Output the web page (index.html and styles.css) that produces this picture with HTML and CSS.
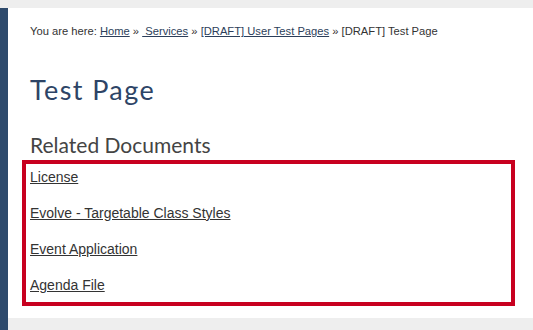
FILE: index.html
```html
<!DOCTYPE html>
<html lang="en">
<head>
<meta charset="utf-8">
<title>Test Page</title>
<link rel="stylesheet" href="styles.css">
</head>
<body>
<div class="topband"></div>
<div class="frame">
  <div class="sidebar"></div>
  <div class="column">
    <main class="content">
      <p class="breadcrumb">You are here: <a href="#">Home</a> &raquo; <a href="#">&nbsp;Services</a> &raquo; <a href="#">[DRAFT] User Test Pages</a> &raquo; [DRAFT] Test Page</p>
      <h1 class="title">Test Page</h1>
      <h2 class="subtitle">Related Documents</h2>
      <div class="docs">
        <p class="doc"><a href="#">License</a></p>
        <p class="doc"><a href="#">Evolve - Targetable Class Styles</a></p>
        <p class="doc"><a href="#">Event Application</a></p>
        <p class="doc"><a href="#">Agenda File</a></p>
      </div>
    </main>
    <div class="footband"></div>
  </div>
</div>
</body>
</html>
```
FILE: styles.css
```css
html, body {
  margin: 0;
  padding: 0;
  height: 100%;
  background: #ffffff;
  overflow: hidden;
}
body {
  display: flex;
  flex-direction: column;
  font-family: "Liberation Sans", Arial, sans-serif;
  color: #333333;
}
.topband {
  height: 8px;
  background: #eeeeee;
  flex: none;
}
.frame {
  flex: 1;
  display: flex;
}
.sidebar {
  width: 8px;
  background: #2e4a6c;
  flex: none;
}
.column {
  flex: 1;
  display: flex;
  flex-direction: column;
}
.content {
  flex: none;
  height: 310px;
  padding: 0 18px 0 14px;
  box-sizing: border-box;
}
.footband {
  flex: 1;
  background: #eeeeee;
}
.breadcrumb {
  margin: 0;
  padding-top: 16px;
  padding-left: 8px;
  font-size: 11.2px;
  line-height: 14px;
  color: #333333;
}
.breadcrumb a {
  color: #2c3e5a;
  text-decoration: underline;
}
.title {
  margin: 0;
  padding-top: 36px;
  padding-left: 8px;
  font-family: "Lato", "Open Sans", sans-serif;
  font-weight: 400;
  font-size: 27px;
  letter-spacing: 1.4px;
  line-height: 32px;
  color: #2d4466;
}
.subtitle {
  margin: 0;
  padding-top: 27px;
  padding-left: 8px;
  font-family: "Lato", "Open Sans", sans-serif;
  font-weight: 400;
  font-size: 21px;
  line-height: 24px;
  color: #444444;
}
.docs {
  margin-top: 3px;
  border: 4px solid #c8001f;
  padding: 0 4px;
  height: 146px;
  box-sizing: border-box;
}
.doc {
  margin: 0 0 10px;
  font-size: 14px;
  line-height: 26px;
}
.doc a {
  color: #333333;
  text-decoration: underline;
}
```
